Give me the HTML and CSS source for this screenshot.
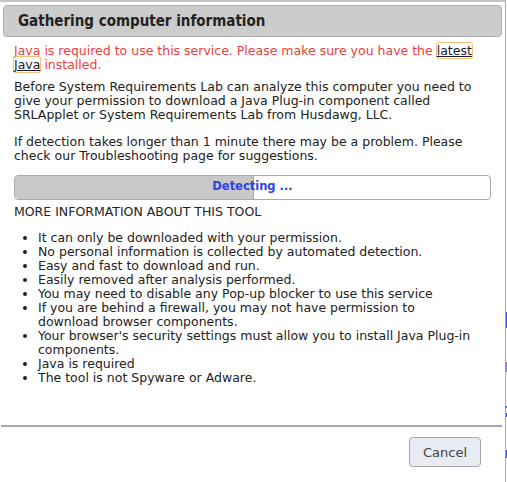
FILE: index.html
```html
<!DOCTYPE html>
<html>
<head>
<meta charset="utf-8">
<link rel="stylesheet" href="styles.css">
</head>
<body>
<div class="backdrop">
  <span class="peek p1"></span>
  <span class="peek p2"></span>
  <span class="peek p3"></span>
  <span class="peek p4"></span>
  <span class="peek p5"></span>
</div>
<div class="dialog">
  <div class="header">Gathering computer information</div>
  <div class="content">
    <p class="warn">Java is required to use this service. Please make sure you have the <a class="link" href="#">latest Java</a> installed.</p>
    <p class="intro">Before System Requirements Lab can analyze this computer you need to give your permission to download a Java Plug-in component called SRLApplet or System Requirements Lab from Husdawg, LLC.</p>
    <p class="para">If detection takes longer than 1 minute there may be a problem. Please check our Troubleshooting page for suggestions.</p>
    <div class="progress">
      <div class="fill" style="width: 50%"></div>
      <span class="label">Detecting ...</span>
    </div>
    <div class="more">MORE INFORMATION ABOUT THIS TOOL</div>
    <ul class="list">
      <li>It can only be downloaded with your permission.</li>
      <li>No personal information is collected by automated detection.</li>
      <li>Easy and fast to download and run.</li>
      <li>Easily removed after analysis performed.</li>
      <li>You may need to disable any Pop-up blocker to use this service</li>
      <li>If you are behind a firewall, you may not have permission to<br>download browser components.</li>
      <li>Your browser's security settings must allow you to install Java Plug-in components.</li>
      <li>Java is required</li>
      <li>The tool is not Spyware or Adware.</li>
    </ul>
  </div>
  <div class="footer">
    <button class="cancel">Cancel</button>
  </div>
</div>
</body>
</html>
```
FILE: styles.css
```css
html, body {
  margin: 0;
  padding: 0;
  background: #fff;
  overflow: hidden;
}
body {
  position: relative;
  width: 507px;
  height: 482px;
  font-family: "DejaVu Sans", Verdana, sans-serif;
  font-size: 12.5px;
  line-height: 14px;
  color: #222;
}
.backdrop {
  position: absolute;
  left: 506px;
  top: 0;
  width: 1px;
  height: 482px;
}
.peek {
  position: absolute;
  left: 0;
  width: 1px;
  background: #3a4ee8;
}
.p1 { top: 312px; height: 16px; }
.p2 { top: 362px; height: 10px; background: #8a6ce8; }
.p3 { top: 406px; height: 2px; }
.p4 { top: 413px; height: 4px; }
.p5 { top: 450px; height: 8px; }
.dialog {
  width: 506px;
  height: 482px;
  box-sizing: border-box;
  border-top: 2px solid #c4c4c4;
  border-right: 1px solid #a8a8a8;
  display: flex;
  flex-direction: column;
}
.header {
  margin: 3px 3px 0 3px;
  height: 32px;
  flex: none;
  box-sizing: border-box;
  background: #cccccc;
  border: 1px solid #b0b0b0;
  border-radius: 4px;
  padding-left: 14px;
  display: flex;
  align-items: center;
  font-family: "DejaVu Sans Condensed", "DejaVu Sans", sans-serif;
  font-weight: bold;
  font-size: 15px;
  color: #222;
}
.content {
  padding: 0 14px;
}
p {
  margin: 0;
}
.warn {
  margin-top: 7px;
  color: #f03c3c;
}
.link {
  color: #1a1a2a;
  text-decoration: underline;
  border-radius: 2px;
  box-shadow: 0 0 0 1px #f2c27a;
  box-decoration-break: clone;
  -webkit-box-decoration-break: clone;
}
.intro {
  margin-top: 8px;
}
.para {
  margin-top: 13px;
}
.progress {
  position: relative;
  margin-top: 12px;
  height: 25px;
  box-sizing: border-box;
  border: 1px solid #aaa;
  border-radius: 4px;
  overflow: hidden;
  display: flex;
  align-items: center;
  justify-content: center;
}
.fill {
  position: absolute;
  left: 0;
  top: 0;
  bottom: 0;
  background: #c8c8c8;
  border-right: 1px solid #aaa;
}
.label {
  position: relative;
  top: -2px;
  font-weight: bold;
  color: #2b44e6;
  font-size: 11.5px;
}
.more {
  margin-top: 5px;
}
.list {
  margin: 12px 0 0 0;
  padding-left: 24px;
}
.footer {
  margin: auto 3px 0 1px;
  border-top: 2px solid #a8a8a8;
  height: 57px;
  flex: none;
  display: flex;
  justify-content: flex-end;
  align-items: flex-start;
  padding-top: 10px;
  padding-right: 21px;
  box-sizing: border-box;
}
.cancel {
  width: 72px;
  height: 30px;
  background: #e8ebf2;
  border: 1px solid #a8a8a8;
  border-radius: 4px;
  font-family: "DejaVu Sans", Verdana, sans-serif;
  font-size: 13px;
  color: #444;
  padding: 0;
}
```
